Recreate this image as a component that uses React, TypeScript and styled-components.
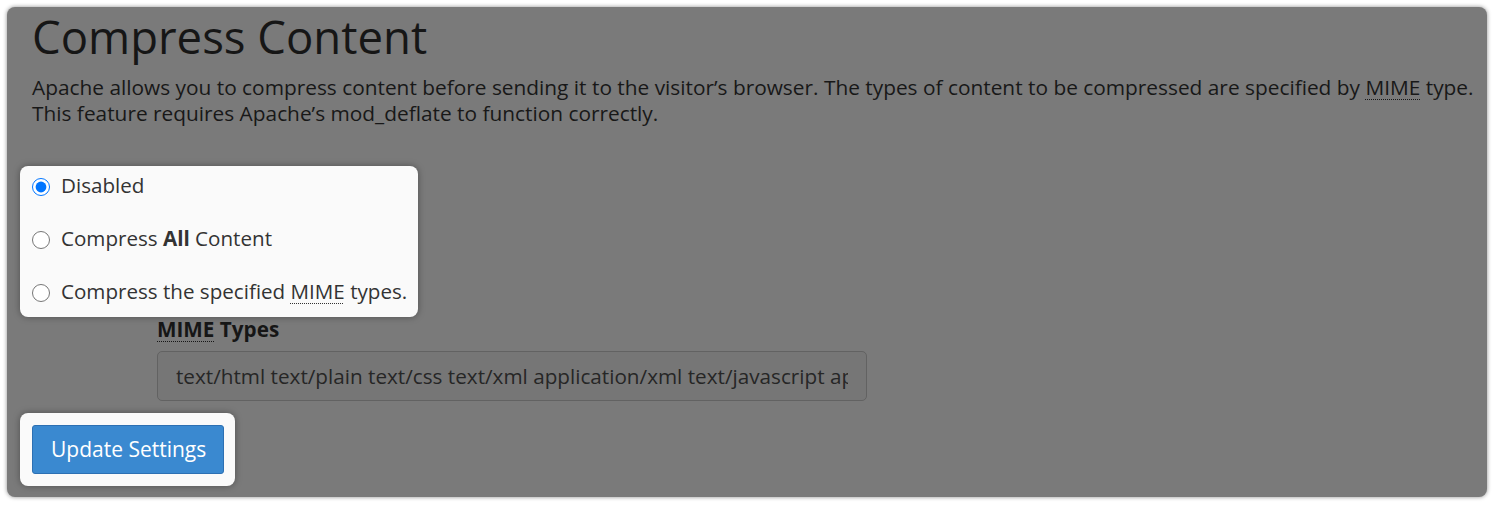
import React from "react";
import styled, { createGlobalStyle } from "styled-components";

const GlobalStyle = createGlobalStyle`
  html, body {
    margin: 0;
    padding: 0;
    background: #ffffff;
  }
  body {
    font-family: "Open Sans", "Noto Sans", "DejaVu Sans", sans-serif;
    color: #1a1a1a;
  }
  * { box-sizing: border-box; }
`;

const Panel = styled.section`
  margin: 7px;
  width: 1480px;
  height: 490px;
  background: #7a7a7a;
  border-radius: 8px;
  box-shadow: 0 0 4px rgba(0, 0, 0, 0.45);
  padding: 2px 4px 0 25px;
  display: flex;
  flex-direction: column;
  align-items: flex-start;
`;

const Title = styled.h1`
  margin: 0;
  font-size: 45.5px;
  font-weight: 400;
  line-height: 54px;
  color: #161616;
`;

const Description = styled.p`
  margin: 11px 0 0;
  font-size: 20.85px;
  line-height: 26px;
  color: #181818;
  white-space: nowrap;
`;

const Abbr = styled.abbr`
  text-decoration: underline dotted;
  text-decoration-thickness: 1px;
  text-underline-offset: 4px;
  cursor: help;
`;

const Spotlight = styled.div<{ $top: number; $pad: string }>`
  margin-top: ${(p) => p.$top}px;
  margin-left: -12px;
  padding: ${(p) => p.$pad};
  background: #fafafa;
  border-radius: 8px;
  box-shadow: 0 0 7px rgba(0, 0, 0, 0.35);
  display: flex;
  flex-direction: column;
  gap: 26px;
`;

const RadioRow = styled.label`
  display: flex;
  align-items: center;
  height: 27px;
  font-size: 20.6px;
  line-height: 27px;
  color: #333333;
  white-space: nowrap;
  cursor: pointer;
`;

const Radio = styled.input`
  width: 18px;
  height: 18px;
  margin: 2px 11px 0 0;
  accent-color: #0075ff;
`;

const FieldGroup = styled.div`
  margin-left: 125px;
  display: flex;
  flex-direction: column;
`;

const FieldLabel = styled.label`
  font-size: 20.7px;
  line-height: 24px;
  font-weight: 700;
  color: #161616;
`;

const TextInput = styled.input`
  margin-top: 10px;
  width: 710px;
  height: 50px;
  padding: 0 18px;
  font-family: "Open Sans", "Noto Sans", sans-serif;
  font-size: 20.7px;
  line-height: 27px;
  color: #262626;
  background: #767676;
  border: 1px solid #626262;
  border-radius: 5px;
  outline: none;
`;

const PrimaryButton = styled.button`
  height: 49px;
  padding: 0 17px 0 18px;
  font-family: "Open Sans", "Noto Sans", sans-serif;
  font-size: 21px;
  line-height: 27px;
  color: #ffffff;
  background: #3a89d0;
  border: 1px solid #2c70b3;
  border-radius: 3px;
  cursor: pointer;
`;

export default function App() {
  return (
    <>
      <GlobalStyle />
      <Panel>
        <Title>Compress Content</Title>
        <Description>
          Apache allows you to compress content before sending it to the visitor’s browser. The types of
          content to be compressed are specified by <Abbr title="Multipurpose Internet Mail Extensions">MIME</Abbr> type.
          <br />
          This feature requires Apache’s mod_deflate to function correctly.
        </Description>

        <Spotlight $top={40} $pad="6px 11px 12px 12px">
          <RadioRow>
            <Radio type="radio" name="compress" defaultChecked />
            Disabled
          </RadioRow>
          <RadioRow>
            <Radio type="radio" name="compress" />
            Compress&nbsp;<b>All</b>&nbsp;Content
          </RadioRow>
          <RadioRow>
            <Radio type="radio" name="compress" />
            Compress the specified&nbsp;<Abbr title="Multipurpose Internet Mail Extensions">MIME</Abbr>&nbsp;types.
          </RadioRow>
        </Spotlight>

        <FieldGroup>
          <FieldLabel>
            <Abbr title="Multipurpose Internet Mail Extensions">MIME</Abbr> Types
          </FieldLabel>
          <TextInput
            type="text"
            readOnly
            defaultValue="text/html text/plain text/css text/xml application/xml text/javascript application/x-javascript application/javascript"
          />
        </FieldGroup>

        <Spotlight $top={12} $pad="12px 11px 12px 12px">
          <PrimaryButton type="button">Update Settings</PrimaryButton>
        </Spotlight>
      </Panel>
    </>
  );
}
